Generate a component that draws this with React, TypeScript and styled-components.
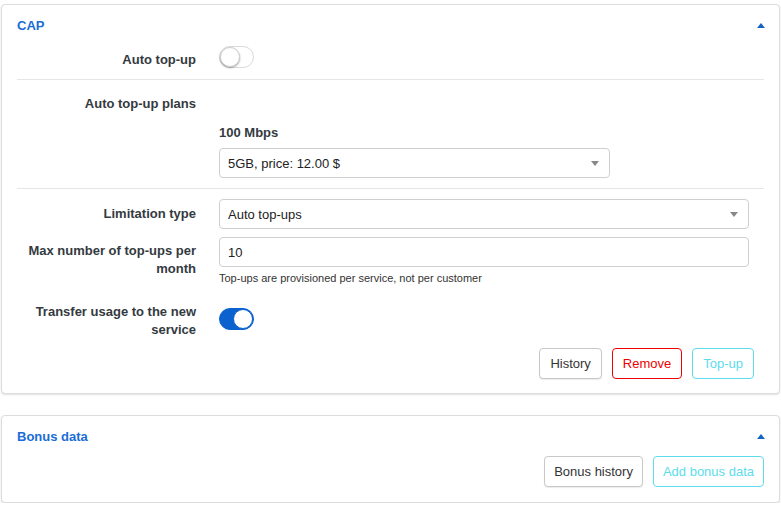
import React from "react";
import styled, { createGlobalStyle, css } from "styled-components";

const Global = createGlobalStyle`
  html, body { margin: 0; padding: 0; background: #fff; }
  body { font-family: "Liberation Sans", Arial, sans-serif; font-size: 13px; color: #343a40; }
  * { box-sizing: border-box; }
`;

const Page = styled.div`
  padding: 4px 1px 0 1px;
  display: flex;
  flex-direction: column;
  gap: 21px;
`;

const Card = styled.section`
  border: 1px solid #dcdcdc;
  border-radius: 4px;
  box-shadow: 0 1px 2px rgba(0, 0, 0, 0.12);
  background: #fff;
`;

const Header = styled.div`
  height: 39px;
  display: flex;
  align-items: center;
  justify-content: space-between;
  padding: 1px 14px 0 15px;
`;

const Title = styled.h3`
  margin: 0;
  font-size: 13px;
  font-weight: 700;
  color: #1a6dd6;
`;

const Caret = styled.span`
  width: 0;
  height: 0;
  border-left: 4px solid transparent;
  border-right: 4px solid transparent;
  border-bottom: 5px solid #1565c0;
`;

const Body = styled.div<{ $top?: number; $bottom: number }>`
  padding: ${(p) => p.$top ?? 0}px 15px ${(p) => p.$bottom}px 15px;
`;

const Divider = styled.hr`
  margin: 0;
  border: 0;
  border-top: 1px solid #e6e6e6;
`;

const Row = styled.div<{ $pt?: number; $pb?: number; $align?: string }>`
  display: grid;
  grid-template-columns: 179px 1fr;
  column-gap: 23px;
  padding-right: 15px;
  padding-top: ${(p) => p.$pt ?? 0}px;
  padding-bottom: ${(p) => p.$pb ?? 0}px;
  align-items: ${(p) => p.$align ?? "center"};
`;

const Label = styled.label<{ $pt?: number }>`
  text-align: right;
  font-weight: 700;
  font-size: 13px;
  line-height: 18px;
  color: #343a40;
  padding-top: ${(p) => p.$pt ?? 0}px;
`;

const Control = styled.div<{ $pt?: number }>`
  display: flex;
  flex-direction: column;
  align-items: flex-start;
  padding-top: ${(p) => p.$pt ?? 0}px;
`;

const SubHeading = styled.div`
  font-weight: 700;
  font-size: 13px;
  line-height: 18px;
  color: #343a40;
  margin-bottom: 6px;
`;

const fieldBase = css`
  height: 30px;
  border: 1px solid #cfcfcf;
  border-radius: 4px;
  background: #fff;
  font-family: "Liberation Sans", Arial, sans-serif;
  font-size: 13px;
  color: #222;
  padding: 0 8px;
  display: flex;
  align-items: center;
`;

const SelectBox = styled.div<{ $w?: number }>`
  ${fieldBase};
  width: ${(p) => (p.$w ? `${p.$w}px` : "100%")};
  justify-content: space-between;
  padding-right: 10px;
`;

const Arrow = styled.span`
  width: 0;
  height: 0;
  border-left: 4px solid transparent;
  border-right: 4px solid transparent;
  border-top: 5px solid #888;
`;

const Input = styled.input`
  ${fieldBase};
  width: 100%;
  outline: none;
`;

const Help = styled.div`
  font-size: 11px;
  line-height: 14px;
  margin-top: 4px;
  color: #333;
`;

const Toggle = styled.span<{ $on?: boolean }>`
  position: relative;
  display: inline-block;
  width: 35px;
  height: 22px;
  border-radius: 11px;
  background: ${(p) => (p.$on ? "#0b62cf" : "#fff")};
  border: 1px solid ${(p) => (p.$on ? "#0b62cf" : "#dadada")};
  &::after {
    content: "";
    position: absolute;
    top: 0;
    ${(p) => (p.$on ? "right: 0;" : "left: 0;")}
    width: 20px;
    height: 20px;
    border-radius: 50%;
    background: #fff;
    box-shadow: ${(p) => (p.$on ? "none" : "0 1px 2px rgba(0,0,0,0.35)")};
    border: ${(p) => (p.$on ? "1px solid #0b62cf" : "1px solid #cfcfcf")};
    box-sizing: border-box;
  }
`;

const Actions = styled.div<{ $pr: number; $mt?: number }>`
  display: flex;
  justify-content: flex-end;
  gap: 10px;
  padding-right: ${(p) => p.$pr}px;
  margin-top: ${(p) => p.$mt ?? 0}px;
`;

const Button = styled.button<{ $variant?: "default" | "danger" | "info"; $px?: number }>`
  height: 31px;
  padding: 0 ${(p) => p.$px ?? 10}px;
  border-radius: 4px;
  background: #fff;
  font-family: "Liberation Sans", Arial, sans-serif;
  font-size: 13px;
  cursor: pointer;
  ${(p) =>
    p.$variant === "danger"
      ? css`border: 1px solid #f00000; color: #f00000;`
      : p.$variant === "info"
      ? css`border: 1px solid #5ddcec; color: #5ddcec;`
      : css`border: 1px solid #c8c8c8; color: #333; box-shadow: 0 1px 1px rgba(0,0,0,0.08);`}
`;

export default function App() {
  return (
    <>
      <Global />
      <Page>
        <Card>
          <Header>
            <Title>CAP</Title>
            <Caret />
          </Header>
          <Body $bottom={14}>
            <Row $pt={2} $pb={10} $align="start">
              <Label $pt={5}>Auto top-up</Label>
              <Control>
                <Toggle />
              </Control>
            </Row>
            <Divider />
            <Row $pt={15}>
              <Label>Auto top-up plans</Label>
              <div />
            </Row>
            <Row $pt={11} $pb={10} $align="start">
              <div />
              <Control>
                <SubHeading>100 Mbps</SubHeading>
                <SelectBox $w={391}>
                  <span>5GB, price: 12.00 $</span>
                  <Arrow />
                </SelectBox>
              </Control>
            </Row>
            <Divider />
            <Row $pt={10}>
              <Label>Limitation type</Label>
              <Control>
                <SelectBox>
                  <span>Auto top-ups</span>
                  <Arrow />
                </SelectBox>
              </Control>
            </Row>
            <Row $pt={8} $align="start">
              <Label $pt={5}>Max number of top-ups per month</Label>
              <Control>
                <Input defaultValue="10" />
                <Help>Top-ups are provisioned per service, not per customer</Help>
              </Control>
            </Row>
            <Row $pt={18} $align="start">
              <Label>Transfer usage to the new service</Label>
              <Control $pt={5}>
                <Toggle $on />
              </Control>
            </Row>
            <Actions $pr={10} $mt={9}>
              <Button>History</Button>
              <Button $variant="danger">Remove</Button>
              <Button $variant="info">Top-up</Button>
            </Actions>
          </Body>
        </Card>
        <Card>
          <Header>
            <Title>Bonus data</Title>
            <Caret />
          </Header>
          <Body $top={1} $bottom={15}>
            <Actions $pr={-1}>
              <Button $px={9}>Bonus history</Button>
              <Button $variant="info" $px={9}>Add bonus data</Button>
            </Actions>
          </Body>
        </Card>
      </Page>
    </>
  );
}
